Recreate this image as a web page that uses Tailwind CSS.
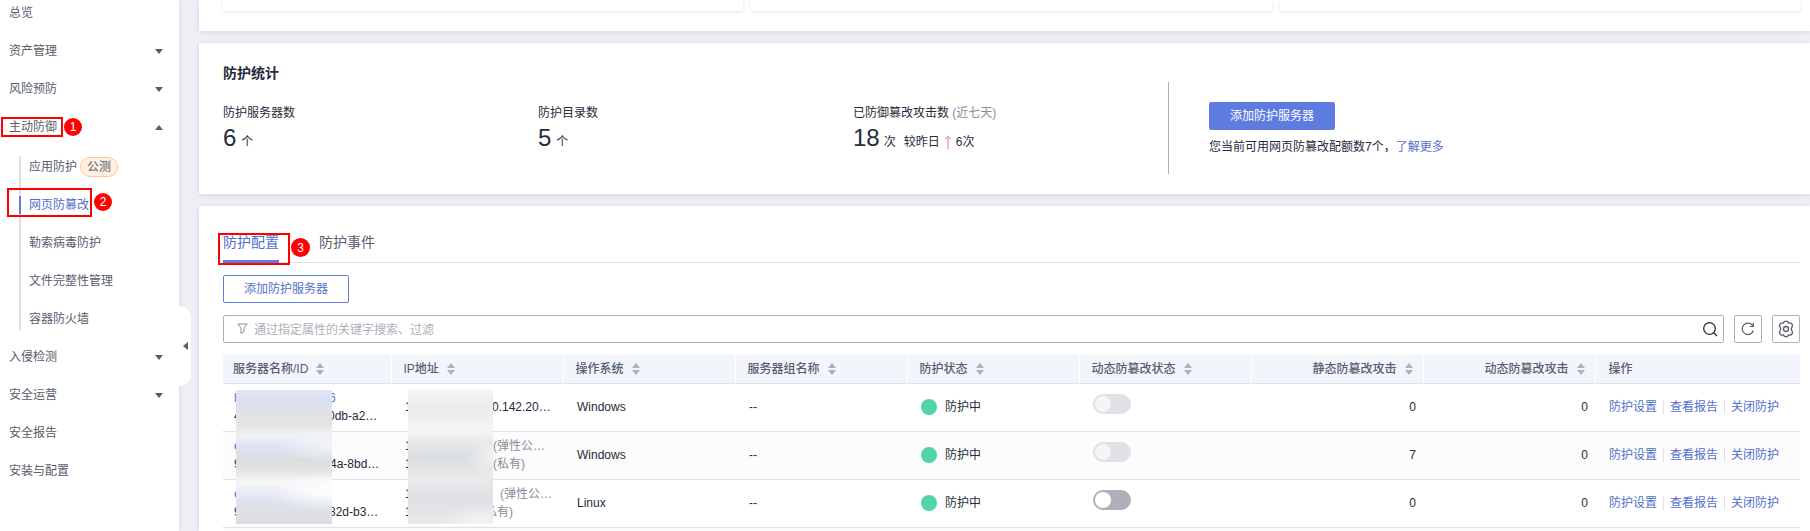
<!DOCTYPE html>
<html lang="zh-CN">
<head>
<meta charset="utf-8">
<title>网页防篡改</title>
<script src="https://cdn.jsdelivr.net/npm/@tailwindcss/browser@4"></script>
</head>
<body class="h-screen overflow-hidden bg-[#eeeff5] font-['Liberation_Sans','Noto_Sans_CJK_SC',sans-serif] text-xs text-[#252b3a]">
<svg class="hidden">
  <symbol id="down" viewBox="0 0 8 5"><path d="M0 0h8L4 5z" fill="#575d6c"/></symbol>
  <symbol id="sort" viewBox="0 0 8 12"><path d="M4 0l4 5H0zM4 12l4-5H0z" fill="#adb0b8"/></symbol>
</svg>
<div class="flex h-full">
  <aside class="relative z-10 w-[179px] shrink-0 bg-white text-[#575d6c] shadow-[0_0_5px_rgba(0,0,0,0.1)]">
    <nav class="-mt-[6px]">
      <a href="#" class="flex h-[38px] items-center pl-[9px]">总览</a>
      <button type="button" class="flex h-[38px] w-full items-center justify-between pr-4 pl-[9px]">资产管理<svg class="h-[5px] w-2"><use href="#down"/></svg></button>
      <button type="button" class="flex h-[38px] w-full items-center justify-between pr-4 pl-[9px]">风险预防<svg class="h-[5px] w-2"><use href="#down"/></svg></button>
      <button type="button" class="relative flex h-[38px] w-full items-center justify-between pr-4 pl-[9px]">主动防御<svg class="h-[5px] w-2 rotate-180"><use href="#down"/></svg>
        <span class="absolute top-[9px] left-px h-5 w-[62px] border-2 border-[#ff0000]"></span>
        <span class="absolute top-[10px] left-[64px] flex size-[18px] items-center justify-center rounded-full bg-[#ff0000] text-white">1</span>
      </button>
      <div class="flex pt-[2px] pl-[19px]">
        <div class="my-[8px] w-[2px] bg-[#dfe1e6]"></div>
        <div class="flex-1">
          <a href="#" class="flex h-[38px] items-center gap-[3px] pl-2">应用防护<span class="flex h-5 items-center rounded-full border border-[#ffc794] bg-[#fff0e3] px-1.5">公测</span></a>
          <a href="#" class="relative flex h-[38px] items-center pl-2 text-[#526ecc]">网页防篡改
            <span class="absolute top-[10px] -left-[2px] h-[18px] w-[2px] bg-[#5e7ce0]"></span>
            <span class="absolute top-[2px] -left-[14px] h-[29px] w-[85px] border-2 border-[#ff0000]"></span>
            <span class="absolute top-[7px] left-[73px] flex size-[18px] items-center justify-center rounded-full bg-[#ff0000] text-white">2</span>
          </a>
          <a href="#" class="flex h-[38px] items-center pl-2">勒索病毒防护</a>
          <a href="#" class="flex h-[38px] items-center pl-2">文件完整性管理</a>
          <a href="#" class="flex h-[38px] items-center pl-2">容器防火墙</a>
        </div>
      </div>
      <button type="button" class="flex h-[38px] w-full items-center justify-between pr-4 pl-[9px]">入侵检测<svg class="h-[5px] w-2"><use href="#down"/></svg></button>
      <button type="button" class="flex h-[38px] w-full items-center justify-between pr-4 pl-[9px]">安全运营<svg class="h-[5px] w-2"><use href="#down"/></svg></button>
      <a href="#" class="flex h-[38px] items-center pl-[9px]">安全报告</a>
      <a href="#" class="flex h-[38px] items-center pl-[9px]">安装与配置</a>
    </nav>
    <button type="button" aria-label="收起导航" class="absolute top-[306px] left-full flex h-20 w-3 items-center justify-center rounded-r-xl bg-white"><svg class="h-2 w-[5px]" viewBox="0 0 5 8"><path d="M5 0v8L0 4z" fill="#575d6c"/></svg></button>
  </aside>
  <main class="ml-5 flex min-w-0 flex-1 flex-col gap-3">
    <section class="h-[31px] shrink-0 bg-white px-6 pr-[10px] shadow-[0_1px_5px_rgba(0,0,0,0.1)]">
      <div class="flex h-[11px] gap-2">
        <div class="flex-1 shadow-[0_1px_4px_rgba(0,0,0,0.1)]"></div>
        <div class="flex-1 shadow-[0_1px_4px_rgba(0,0,0,0.1)]"></div>
        <div class="flex-1 shadow-[0_1px_4px_rgba(0,0,0,0.1)]"></div>
      </div>
    </section>
    <section class="flex h-[151px] shrink-0 bg-white pl-6 shadow-[0_1px_5px_rgba(0,0,0,0.1)]">
      <div class="w-[945px] shrink-0 pt-5">
        <h2 class="text-sm leading-5 font-bold">防护统计</h2>
        <dl class="mt-[21px] grid grid-cols-3">
          <div>
            <dt class="leading-[18px]">防护服务器数</dt>
            <dd class="flex items-baseline gap-[5px]"><span class="text-2xl">6</span>个</dd>
          </div>
          <div>
            <dt class="leading-[18px]">防护目录数</dt>
            <dd class="flex items-baseline gap-[5px]"><span class="text-2xl">5</span>个</dd>
          </div>
          <div>
            <dt class="leading-[18px]">已防御篡改攻击数 <span class="text-[#8a8e99]">(近七天)</span></dt>
            <dd class="flex items-baseline gap-[4px]"><span class="text-2xl">18</span>次<span class="ml-1">较昨日</span><svg class="mt-2 h-[14px] w-2 self-center" viewBox="0 0 8 14" fill="none" stroke="#f66f9b"><path d="M4 14V1.500M1.200 4.200L4 1.300l2.800 2.900"/></svg><span>6次</span></dd>
          </div>
        </dl>
      </div>
      <div class="mt-[39px] h-[92px] w-px bg-[#adb0b8]"></div>
      <div class="pt-[59px] pl-10">
        <button type="button" class="flex h-7 w-[126px] items-center justify-center rounded-[2px] bg-[#5e7ce0] text-white">添加防护服务器</button>
        <p class="mt-2 leading-[18px]">您当前可用网页防篡改配额数7个，<a href="#" class="text-[#526ecc]">了解更多</a></p>
      </div>
    </section>
    <section class="min-h-0 flex-1 overflow-hidden bg-white pt-6 pr-[10px] pl-6 shadow-[0_1px_5px_rgba(0,0,0,0.1)]">
      <div class="relative flex h-[33px] gap-10 border-b border-[#dfe1e6] text-sm leading-6">
        <button type="button" class="-mb-px flex items-start border-b-3 border-[#5e7ce0] text-[#526ecc]">防护配置</button>
        <button type="button" class="flex items-start text-[#575d6c]">防护事件</button>
        <span class="absolute top-[3px] -left-[5px] h-8 w-[72px] border-2 border-[#ff0000]"></span>
        <span class="absolute top-[8px] left-[68px] flex size-[19px] items-center justify-center rounded-full bg-[#ff0000] text-xs text-white">3</span>
      </div>
      <button type="button" class="mt-3 flex h-7 w-[126px] items-center justify-center rounded-[2px] border border-[#5e7ce0] text-[#526ecc]">添加防护服务器</button>
      <div class="mt-3 flex gap-[10px]">
        <label class="flex h-7 flex-1 items-center gap-[6px] rounded-[2px] border border-[#adb0b8] pr-[5px] pl-[13px]">
          <svg class="h-3 w-[11px]" viewBox="0 0 11 12" fill="none" stroke="#8a8e99"><path d="M.8 1h9.400L7 5v3.500L4 10.500V5z"/></svg>
          <input type="text" aria-label="搜索" placeholder="通过指定属性的关键字搜索、过滤" class="h-full flex-1 pt-px outline-none placeholder:text-[#adb0b8]">
          <svg class="size-4" viewBox="0 0 16 16" fill="none" stroke="#252b3a" stroke-width="1.300"><circle cx="7.500" cy="7.500" r="5.800"/><path d="M11.500 11.500L15 15"/></svg>
        </label>
        <button type="button" aria-label="刷新" class="flex size-7 items-center justify-center rounded-[2px] border border-[#adb0b8]"><svg class="size-[14px]" viewBox="0 0 14 14" fill="none" stroke="#575d6c" stroke-width="1.200"><path d="M12.400 8.500A5.700 5.700 0 1 1 11.800 3.800M12.300 1v3.500H8.800"/></svg></button>
        <button type="button" aria-label="设置" class="flex size-7 items-center justify-center rounded-[2px] border border-[#adb0b8]"><svg class="size-[18px]" viewBox="0 0 18 18" fill="none" stroke="#575d6c" stroke-width="1.300"><path d="M6.500 3C7 1.400 8 1.200 9 1.200S11 1.400 11.500 3c1.800-.4 3 .2 3.600 1.200s.7 2.200-.4 3.400c-.6.900-.6 1.900 0 2.800 1.100 1.200 1 2.400.4 3.400s-1.800 1.600-3.600 1.200c-.5 1.600-1.500 1.800-2.500 1.800s-2-.2-2.500-1.800c-1.800.4-3-.2-3.600-1.200s-.7-2.200.4-3.400c.6-.9.6-1.900 0-2.800-1.100-1.200-1-2.400-.4-3.400S4.700 2.600 6.500 3z"/><circle cx="9" cy="9" r="2.500"/></svg></button>
      </div>
      <div class="relative mt-3">
        <table class="w-full table-fixed border-collapse">
          <colgroup><col class="w-[168px]"><col class="w-[172px]"><col class="w-[172px]"><col class="w-[172px]"><col class="w-[172px]"><col class="w-[172px]"><col class="w-[172px]"><col class="w-[172px]"><col></colgroup>
          <thead>
            <tr class="h-7 border-b border-[#dfe1e6] bg-[#f2f5fc] text-left text-[#575d6c]">
              <th class="border-r border-white pt-px pl-[10px] font-medium"><span class="flex items-center gap-2">服务器名称/ID<svg class="h-3 w-2"><use href="#sort"/></svg></span></th>
              <th class="border-r border-white pt-px pl-3 font-medium"><span class="flex items-center gap-2">IP地址<svg class="h-3 w-2"><use href="#sort"/></svg></span></th>
              <th class="border-r border-white pt-px pl-3 font-medium"><span class="flex items-center gap-2">操作系统<svg class="h-3 w-2"><use href="#sort"/></svg></span></th>
              <th class="border-r border-white pt-px pl-3 font-medium"><span class="flex items-center gap-2">服务器组名称<svg class="h-3 w-2"><use href="#sort"/></svg></span></th>
              <th class="border-r border-white pt-px pl-3 font-medium"><span class="flex items-center gap-2">防护状态<svg class="h-3 w-2"><use href="#sort"/></svg></span></th>
              <th class="border-r border-white pt-px pl-3 font-medium"><span class="flex items-center gap-2">动态防篡改状态<svg class="h-3 w-2"><use href="#sort"/></svg></span></th>
              <th class="border-r border-white pt-px pr-[10px] font-medium"><span class="flex items-center justify-end gap-2">静态防篡改攻击<svg class="h-3 w-2"><use href="#sort"/></svg></span></th>
              <th class="border-r border-white pt-px pr-[10px] font-medium"><span class="flex items-center justify-end gap-2">动态防篡改攻击<svg class="h-3 w-2"><use href="#sort"/></svg></span></th>
              <th class="pt-px pl-[13px] font-medium">操作</th>
            </tr>
          </thead>
          <tbody>
            <tr class="h-12 border-b border-[#dfe1e6]">
              <td class="pl-[11px] leading-[18px]"><a href="#" class="flex text-[#526ecc]"><span class="w-[95px]">h</span>6</a><div class="flex"><span class="w-[94px]">4</span>0db-a2…</div></td>
              <td class="pl-[14px]"><div class="flex"><span class="w-[87px]">1</span>0.142.20…</div></td>
              <td class="pl-[14px]">Windows</td>
              <td class="pl-[14px]">--</td>
              <td class="pl-[14px]"><span class="flex items-center gap-2"><i class="size-4 rounded-full bg-[#50d4ab]"></i>防护中</span></td>
              <td class="pb-[6px] pl-[14px]"><label class="flex h-5 w-[38px] items-center rounded-full bg-[#dfe1e6] pl-[2px]"><input type="checkbox" disabled aria-label="动态防篡改" class="size-4 appearance-none rounded-full bg-[#f5f5f6]"></label></td>
              <td class="pr-[7px] text-right">0</td>
              <td class="pr-[7px] text-right">0</td>
              <td class="pl-[14px]"><div class="flex items-center gap-[6px] whitespace-nowrap text-[#526ecc]"><a href="#">防护设置</a><i class="h-[14px] w-px bg-[#dfe1e6]"></i><a href="#">查看报告</a><i class="h-[14px] w-px bg-[#dfe1e6]"></i><a href="#">关闭防护</a></div></td>
            </tr>
            <tr class="h-12 border-b border-[#dfe1e6] bg-[#fcfcfc]">
              <td class="pl-[11px] leading-[18px]"><a href="#" class="text-[#526ecc]">e</a><div class="flex"><span class="w-[96px]">9</span>4a-8bd…</div></td>
              <td class="pl-[14px] leading-[18px]"><div class="flex"><span class="w-[88px]">1</span><span class="text-[#8a8e99]">(弹性公…</span></div><div class="flex"><span class="w-[88px]">1</span><span class="text-[#8a8e99]">(私有)</span></div></td>
              <td class="pl-[14px]">Windows</td>
              <td class="pl-[14px]">--</td>
              <td class="pl-[14px]"><span class="flex items-center gap-2"><i class="size-4 rounded-full bg-[#50d4ab]"></i>防护中</span></td>
              <td class="pb-[6px] pl-[14px]"><label class="flex h-5 w-[38px] items-center rounded-full bg-[#dfe1e6] pl-[2px]"><input type="checkbox" disabled aria-label="动态防篡改" class="size-4 appearance-none rounded-full bg-[#f5f5f6]"></label></td>
              <td class="pr-[7px] text-right">7</td>
              <td class="pr-[7px] text-right">0</td>
              <td class="pl-[14px]"><div class="flex items-center gap-[6px] whitespace-nowrap text-[#526ecc]"><a href="#">防护设置</a><i class="h-[14px] w-px bg-[#dfe1e6]"></i><a href="#">查看报告</a><i class="h-[14px] w-px bg-[#dfe1e6]"></i><a href="#">关闭防护</a></div></td>
            </tr>
            <tr class="h-12 border-b border-[#dfe1e6]">
              <td class="pl-[11px] leading-[18px]"><a href="#" class="text-[#526ecc]">e</a><div class="flex"><span class="w-[95px]">9</span>82d-b3…</div></td>
              <td class="pl-[14px] leading-[18px]"><div class="flex"><span class="w-[95px]">1</span><span class="text-[#8a8e99]">(弹性公…</span></div><div class="flex"><span class="w-[80px]">1</span><span class="text-[#8a8e99]">私有)</span></div></td>
              <td class="pl-[14px]">Linux</td>
              <td class="pl-[14px]">--</td>
              <td class="pl-[14px]"><span class="flex items-center gap-2"><i class="size-4 rounded-full bg-[#50d4ab]"></i>防护中</span></td>
              <td class="pb-[6px] pl-[14px]"><label class="flex h-5 w-[38px] items-center rounded-full bg-[#adb0b8] pl-[2px]"><input type="checkbox" aria-label="动态防篡改" class="size-4 appearance-none rounded-full bg-white"></label></td>
              <td class="pr-[7px] text-right">0</td>
              <td class="pr-[7px] text-right">0</td>
              <td class="pl-[14px]"><div class="flex items-center gap-[6px] whitespace-nowrap text-[#526ecc]"><a href="#">防护设置</a><i class="h-[14px] w-px bg-[#dfe1e6]"></i><a href="#">查看报告</a><i class="h-[14px] w-px bg-[#dfe1e6]"></i><a href="#">关闭防护</a></div></td>
            </tr>
            <tr class="h-[3px] bg-[#fcfcfc]"><td colspan="9"></td></tr>
          </tbody>
        </table>
        <div class="absolute top-[35px] left-[13px] h-[134px] w-24 bg-[radial-gradient(ellipse_60%_14%_at_95%_76%,#ffffff_0%,transparent_100%),radial-gradient(ellipse_60%_14%_at_100%_40%,#f4f5fa_0%,transparent_100%),linear-gradient(180deg,#e0e4f6_0%,#dde0f1_8%,#e2e2e5_20%,#e3e3e5_26%,#f0f1f6_34%,#dfe3f2_42%,#dcdde0_52%,#e2e3e5_60%,#f7f7f8_69%,#e9ecf6_76%,#dfe3f1_83%,#dfe0e3_92%,#dcdde0_100%)]"></div>
        <div class="absolute top-[34px] left-[185px] h-[135px] w-[85px] bg-[radial-gradient(ellipse_50%_16%_at_85%_100%,#f4f4f5_0%,transparent_100%),radial-gradient(ellipse_30%_16%_at_100%_50%,#f0f1f2_0%,transparent_100%),linear-gradient(180deg,#f6f6f6_0%,#ebebec_12%,#eeeeef_20%,#f6f6f7_30%,#e4e6e8_40%,#dcdfe1_50%,#e2e4e6_60%,#e9eaec_68%,#dfe1e4_78%,#e0e2e4_88%,#e8e9ea_100%)]"></div>
      </div>
    </section>
  </main>
</div>
</body>
</html>
